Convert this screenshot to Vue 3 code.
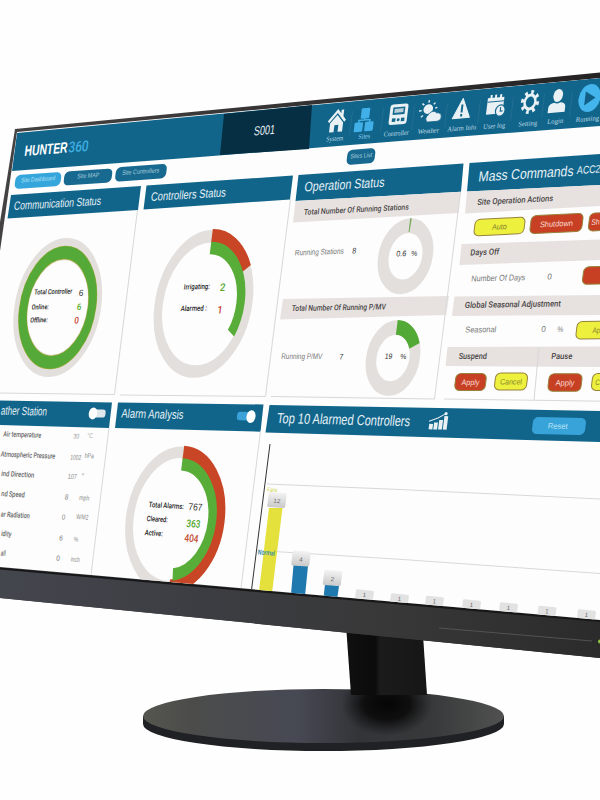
<script setup>
// perspective of the tilted screen: rows fan out from a point far to the left
const VX = -2433
const VY = 357
const SKEW = -0.125

const place = (x, y, sx = 1, sy = 1) => {
    const slope = (y - VY) / (x - VX)
    return `matrix(${sx} ${(slope * sx).toFixed(4)} ${SKEW * sy} ${sy} ${x} ${y})`
}

const BLUE = '#11658b'

const bands = [
    // header
    { p: '17,133 600,78 600,126 400,141 200,157 12,171', f: BLUE },
    { p: '224,114 312,105 309,149 220,155', f: '#062f43' },
    // panel titles
    { p: '11,195 141,186 138,210 7.5,218.6', f: BLUE },
    { p: '146.5,185.5 293,175.5 290,199.5 143.5,209.5', f: BLUE },
    { p: '298.5,175 463.5,163.5 461,191.8 295.5,201', f: BLUE },
    { p: '469.5,163 600,154 600,185 467,191.5', f: BLUE },
    { p: '0,400.5 112,402.5 109,428 0,425', f: BLUE },
    { p: '118,402.5 263.5,404.5 260.5,431.7 115,428', f: BLUE },
    { p: '269.5,405 600,411 600,442 265.5,432.5', f: BLUE },
    // sub titles
    { p: '295.5,201 461,191.8 458.5,213 293,222.5', f: '#e7e2e0' },
    { p: '283,299 449,296 446,315 280,319.5', f: '#e7e2e0' },
    { p: '467,191.5 600,185 600,206 465,213.5', f: '#e7e2e0' },
    { p: '461.5,244 600,239.5 600,260 459.5,265', f: '#e7e2e0' },
    { p: '454.5,296.5 600,295 600,315 452,316', f: '#e7e2e0' },
    { p: '447.5,347 600,346.5 600,367 445.5,366', f: '#e7e2e0' }
]

const lines = [
    'M137.5 210 L114.5 394.5 L0 393',
    'M290.5 199 L265.5 396.5 L120 395',
    'M460.5 192 L434.5 399 L271 396.5',
    'M600 401.2 L444 399',
    'M539 347 L534 400',
    'M109 428 L91 575',
    'M260.5 431 L241 588',
    'M267 484 L400 489.5 L600 499',
    'M258 550.5 L400 559.3 L600 573.5'
]

// x, y = start of the baseline, w = drawn width
const texts = [
    { t: 'HUNTER', x: 24, y: 156, w: 43, s: 15, c: '#fff', b: 1 },
    { t: '360', x: 68, y: 152.5, w: 20, s: 15, c: '#3fb0e4', k: 1 },
    { t: 'S001', x: 253.5, y: 135.5, w: 21, s: 13, c: '#e8f1f5' },
    { t: 'Site Dashboard', x: 21, y: 182.5, w: 34, s: 6.5, c: '#b6e2f6' },
    { t: 'Site MAP', x: 77, y: 178.5, w: 22, s: 6.5, c: '#a9cddd' },
    { t: 'Site Controllers', x: 122, y: 175, w: 37, s: 6.5, c: '#a9cddd' },
    { t: 'Sites List', x: 350, y: 158.5, w: 22, s: 6.5, c: '#a9cddd' },
    { t: 'Communication Status', x: 13.5, y: 210, w: 87, s: 12, c: '#e6f1f6' },
    { t: 'Controllers Status', x: 150.5, y: 201, w: 75, s: 12.2, c: '#e6f1f6' },
    { t: 'Operation Status', x: 304, y: 191.5, w: 80, s: 13.5, c: '#e6f1f6' },
    { t: 'Mass Commands', x: 478, y: 181.5, w: 95, s: 14.5, c: '#e6f1f6' },
    { t: 'ACC2', x: 576.5, y: 174, w: 23.5, s: 11, c: '#e6f1f6' },
    { t: 'ather Station', x: 0.5, y: 414.5, w: 46, s: 12, c: '#e6f1f6' },
    { t: 'Alarm Analysis', x: 121, y: 417.5, w: 62, s: 12.5, c: '#e6f1f6' },
    { t: 'Top 10 Alarmed Controllers', x: 276.5, y: 423, w: 133, s: 14.5, c: '#e6f1f6' },
    { t: 'Reset', x: 547.5, y: 428.5, w: 20, s: 8, c: '#b9e4f7' },

    { t: 'Total Controller', x: 34, y: 294.5, w: 38, s: 7, c: '#222', k: 1 },
    { t: '6', x: 78.5, y: 296, w: 4.5, s: 9, c: '#333' },
    { t: 'Online:', x: 31.5, y: 309.5, w: 17, s: 7, c: '#222', k: 1 },
    { t: '6', x: 76.5, y: 310, w: 4.5, s: 9, c: '#55b02c', k: 1 },
    { t: 'Offline:', x: 30, y: 322.5, w: 17.5, s: 7, c: '#222', k: 1 },
    { t: '0', x: 74, y: 323.5, w: 4.5, s: 9, c: '#c8412c', k: 1 },
    { t: 'Irrigating:', x: 183.5, y: 289.5, w: 26, s: 7.5, c: '#222', k: 1 },
    { t: '2', x: 219.5, y: 291, w: 5.5, s: 10.5, c: '#4fa52c', k: 1 },
    { t: 'Alarmed :', x: 180.5, y: 311, w: 26, s: 7.5, c: '#222', k: 1 },
    { t: '1', x: 217, y: 313.5, w: 5, s: 10.5, c: '#c23420', k: 1 },

    { t: 'Total Number Of Running Stations', x: 303.5, y: 215, w: 105, s: 8, c: '#4a4646', k: 1 },
    { t: 'Running Stations', x: 294.5, y: 255.5, w: 49, s: 8, c: '#777' },
    { t: '8', x: 352, y: 253.5, w: 4, s: 8, c: '#333' },
    { t: '0.6', x: 396, y: 256.5, w: 10, s: 8, c: '#333' },
    { t: '%', x: 411, y: 256, w: 6, s: 7.5, c: '#333' },
    { t: 'Total Number Of Running P/MV', x: 291.5, y: 311, w: 94, s: 8, c: '#4a4646', k: 1 },
    { t: 'Running P/MV', x: 281, y: 359, w: 41, s: 8, c: '#777' },
    { t: '7', x: 339, y: 359.5, w: 4, s: 8, c: '#333' },
    { t: '19', x: 384.5, y: 359, w: 7.5, s: 8, c: '#333' },
    { t: '%', x: 400, y: 359, w: 6, s: 7.5, c: '#333' },

    { t: 'Site Operation Actions', x: 477, y: 205, w: 76, s: 8.5, c: '#4a4646', k: 1 },
    { t: 'Days Off', x: 470, y: 255.5, w: 29, s: 8.5, c: '#4a4646', k: 1 },
    { t: 'Number Of Days', x: 471, y: 281.5, w: 54, s: 8.5, c: '#777' },
    { t: '0', x: 547, y: 279.5, w: 4.5, s: 8.5, c: '#777' },
    { t: 'Global Seasonal Adjustment', x: 464.5, y: 308, w: 96, s: 8.5, c: '#4a4646', k: 1 },
    { t: 'Seasonal', x: 465, y: 332.5, w: 31, s: 8.5, c: '#777' },
    { t: '0', x: 541, y: 332, w: 4.5, s: 8.5, c: '#777' },
    { t: '%', x: 557, y: 332, w: 6, s: 8, c: '#777' },
    { t: 'Suspend', x: 458.5, y: 359, w: 28, s: 8.5, c: '#4a4646', k: 1 },
    { t: 'Pause', x: 551, y: 359, w: 21, s: 8.5, c: '#4a4646', k: 1 },

    { t: 'Air temperature', x: 3, y: 436.5, w: 38, s: 7.5, c: '#666', k: 1 },
    { t: 'Atmospheric Pressure', x: 0.5, y: 456.5, w: 54.5, s: 7.5, c: '#666', k: 1 },
    { t: 'ind Direction', x: 1, y: 476, w: 33, s: 7.5, c: '#666', k: 1 },
    { t: 'nd Speed', x: 1, y: 496, w: 23.5, s: 7.5, c: '#666', k: 1 },
    { t: 'ar Radiation', x: 0.5, y: 516.5, w: 29, s: 7.5, c: '#666', k: 1 },
    { t: 'idity', x: 1, y: 536, w: 10, s: 7.5, c: '#666', k: 1 },
    { t: 'all', x: 0.5, y: 555.5, w: 4.8, s: 7.5, c: '#666', k: 1 },
    { t: '30', x: 73, y: 438.5, w: 6, s: 7, c: '#999' },
    { t: '°C', x: 87, y: 438, w: 5.5, s: 7, c: '#aaa' },
    { t: '1002', x: 70, y: 459.5, w: 11, s: 7, c: '#888' },
    { t: 'hPa', x: 84.5, y: 458, w: 9, s: 7, c: '#888' },
    { t: '107', x: 67.5, y: 478.5, w: 9, s: 7, c: '#888' },
    { t: '°', x: 81, y: 478, w: 3, s: 7, c: '#999' },
    { t: '8', x: 64.5, y: 499.5, w: 3.5, s: 7.5, c: '#777' },
    { t: 'mph', x: 79, y: 500, w: 10, s: 7, c: '#888' },
    { t: '0', x: 61.5, y: 519.5, w: 3.5, s: 7.5, c: '#888' },
    { t: 'W/M2', x: 76, y: 519, w: 12, s: 7, c: '#888' },
    { t: '6', x: 59, y: 540.5, w: 3.5, s: 7.5, c: '#777' },
    { t: '%', x: 73.5, y: 541.5, w: 4.5, s: 7, c: '#888' },
    { t: '0', x: 56, y: 560.5, w: 3.5, s: 7.5, c: '#777' },
    { t: 'inch', x: 70.5, y: 561.5, w: 9, s: 7, c: '#888' },

    { t: 'Total Alarms:', x: 148.5, y: 507, w: 35, s: 7.5, c: '#222', k: 1 },
    { t: '767', x: 188, y: 510, w: 14, s: 10, c: '#333' },
    { t: 'Cleared:', x: 146.5, y: 521, w: 21, s: 7.5, c: '#222', k: 1 },
    { t: '363', x: 186, y: 527, w: 14, s: 10.5, c: '#4fa52c', k: 1 },
    { t: 'Active:', x: 144.5, y: 535, w: 18, s: 7.5, c: '#222', k: 1 },
    { t: '404', x: 184, y: 541.5, w: 14, s: 10.5, c: '#c24a30', k: 1 },
    { t: 'Fans', x: 267, y: 491.5, w: 10, s: 6, c: '#c9d12f' }
]

const menu = [
    { t: 'System', x: 326, y: 141.5, w: 17 },
    { t: 'Sites', x: 358, y: 139, w: 12, c: '#8fd2f2' },
    { t: 'Controller', x: 383.5, y: 136.5, w: 25 },
    { t: 'Weather', x: 417.5, y: 134, w: 21 },
    { t: 'Alarm Info', x: 447, y: 131.5, w: 29 },
    { t: 'User log', x: 483, y: 129, w: 22 },
    { t: 'Setting', x: 518, y: 126.5, w: 19 },
    { t: 'Login', x: 547, y: 124, w: 16 },
    { t: 'Running', x: 575.5, y: 122, w: 23.5 }
]

const dividers = [[351, 121], [382, 118], [413, 116], [446, 113], [479, 110], [512, 107], [543, 104], [571, 102]]

const buttons = [
    { x: 38, y: 180.5, w: 46, h: 14, f: '#35a6dc' },
    { x: 88, y: 177, w: 48, h: 14, f: '#17698f' },
    { x: 141, y: 172.7, w: 51, h: 14.5, f: '#17698f' },
    { x: 361, y: 156.5, w: 28, h: 15, f: '#17698f' },
    { x: 559, y: 426, w: 53, h: 17, f: '#38a3d8' },
    { x: 499.5, y: 226.5, w: 50, h: 16.5, f: '#eef03e', t: 'Auto', tw: 15 },
    { x: 556.5, y: 223.5, w: 52, h: 18, f: '#c84024', t: 'Shutdown', tw: 33 },
    { x: 614, y: 221, w: 50, h: 18, f: '#c84024', t: 'Sh', tw: 8.5, tx: -18.5 },
    { x: 608, y: 275, w: 50, h: 17.5, f: '#c84024' },
    { x: 602, y: 330, w: 51, h: 17.5, f: '#eef03e', t: 'Ap', tw: 8, tx: -5.5 },
    { x: 470.5, y: 382, w: 30.5, h: 17, f: '#c84024', t: 'Apply', tw: 18 },
    { x: 511, y: 381.5, w: 32, h: 17, f: '#eef03e', t: 'Cancel', tw: 22 },
    { x: 565, y: 382.5, w: 33, h: 17.5, f: '#c84024', t: 'Apply', tw: 19 },
    { x: 608.5, y: 382, w: 33, h: 17, f: '#eef03e', t: 'C', tw: 4.5, tx: -11 }
]

// arcs: [share of the circle, inner radius, outer radius, colour]
const rings = [
    { x: 57.7, y: 307.5, rx: 43.5, ry: 69.5, inner: 68, arcs: [[100, 69, 89, '#a5ad3a'], [100, 70, 88, '#55a938']] },
    { x: 203.5, y: 303.8, rx: 49, ry: 74, inner: 83, arcs: [[16.5, 82, 101, '#c84626'], [34, 67, 84, '#58ad38']] },
    { x: 405.5, y: 256.3, rx: 27.5, ry: 38, inner: 61, arcs: [[0.9, 64, 100, '#74a95a']] },
    { x: 393, y: 358, rx: 27, ry: 38, inner: 61, arcs: [[18.5, 61, 100, '#53a936']] },
    { x: 175, y: 519.5, rx: 49, ry: 73, inner: 84, arcs: [[49, 82, 101, '#c84626'], [48, 67, 84, '#58ad38']] }
]

const bars = [
    { p: '269,508 282.5,508 272,593 259,591', f: '#e4e13d' },
    { p: '293.5,565 308,566 305,596 291,594', f: '#2079ae' },
    { p: '325,584 339,586 337,600 323.5,598', f: '#2079ae' }
]

const tags = [
    { x: 277, y: 500, t: '12' },
    { x: 301, y: 558.5, t: '4' },
    { x: 332.5, y: 578, t: '2' }
]

// values that sit right above the lower edge of the screen
const lowTags = [
    { x: 364.5, y: 594.5 },
    { x: 399.5, y: 598.5 },
    { x: 434.5, y: 601 },
    { x: 471.5, y: 604.5 },
    { x: 508.5, y: 607.5 },
    { x: 547, y: 611 },
    { x: 586.5, y: 614.5 }
]
</script>

<template>
    <main class="stage">
        <svg class="monitor" viewBox="0 0 600 800" width="600" height="800" xmlns="http://www.w3.org/2000/svg">
            <defs>
                <clipPath id="screen">
                    <path d="M17 132 L600 78 V620 L0 567 V251 Z" />
                </clipPath>
                <linearGradient id="chin" x1="0" x2="1">
                    <stop offset="0" stop-color="#44464e" />
                    <stop offset="0.35" stop-color="#3c3d42" />
                    <stop offset="0.65" stop-color="#383838" />
                    <stop offset="1" stop-color="#2b2b2b" />
                </linearGradient>
                <linearGradient id="rim" x1="0" x2="1">
                    <stop offset="0" stop-color="#454243" />
                    <stop offset="1" stop-color="#242223" />
                </linearGradient>
                <linearGradient id="foot" x1="0" x2="1">
                    <stop offset="0" stop-color="#55564f" />
                    <stop offset="0.14" stop-color="#4b4c4a" />
                    <stop offset="0.42" stop-color="#474954" />
                    <stop offset="0.6" stop-color="#333438" />
                    <stop offset="0.8" stop-color="#38393a" />
                    <stop offset="1" stop-color="#505150" />
                </linearGradient>
                <linearGradient id="neck" x1="0" x2="1">
                    <stop offset="0" stop-color="#101010" />
                    <stop offset="0.36" stop-color="#0b0b0b" />
                    <stop offset="0.42" stop-color="#1b1b1b" />
                    <stop offset="1" stop-color="#161616" />
                </linearGradient>
                <linearGradient id="tag" x1="0" x2="0" y1="0" y2="1">
                    <stop offset="0" stop-color="#f3f3f3" />
                    <stop offset="1" stop-color="#c9c9c9" />
                </linearGradient>
                <radialGradient id="shade">
                    <stop offset="0" stop-color="#050505" />
                    <stop offset="0.5" stop-color="#080808" stop-opacity="0.85" />
                    <stop offset="1" stop-color="#111" stop-opacity="0" />
                </radialGradient>
                <clipPath id="plate">
                    <ellipse cx="323.5" cy="716" rx="180.5" ry="27" />
                </clipPath>
            </defs>

            <!-- stand -->
            <path d="M143 716 V724 A180.5 27 0 0 0 504 724 V716 Z" fill="#202124" />
            <ellipse cx="323.5" cy="716" rx="180.5" ry="27" fill="url(#foot)" />
            <ellipse cx="387" cy="704" rx="46" ry="32" fill="url(#shade)" clip-path="url(#plate)" />
            <path d="M346 625 L423 635 L427 695 H351 Z" fill="url(#neck)" />

            <!-- case -->
            <path d="M15 129 L600 72.5 V658 L0 598 V222 Z" fill="url(#rim)" />
            <path d="M0 567 L600 620 V658 L0 598 Z" fill="url(#chin)" />
            <path d="M0 568.5 L600 621" stroke="#171717" stroke-width="2" />
            <path d="M439 628 L592 641" stroke="#5c5c5c" stroke-width="0.8" />
            <circle cx="600" cy="641.5" r="2" fill="#8ec63f" />

            <g clip-path="url(#screen)">
                <rect width="600" height="640" fill="#fdfdfd" />
                <polygon v-for="(b, i) in bands" :key="'b' + i" :points="b.p" :fill="b.f" />
                <path v-for="(d, i) in lines" :key="'l' + i" :d="d" class="rule" />

                <g v-for="(r, i) in rings" :key="'r' + i" :transform="place(r.x, r.y, r.rx / 100, r.ry / 100)">
                    <circle :r="(100 + r.inner) / 2" :stroke-width="100 - r.inner" fill="none" stroke="#e3dfdc" />
                    <circle v-for="(a, j) in r.arcs" :key="j" :r="(a[1] + a[2]) / 2" :stroke-width="a[2] - a[1]"
                        :stroke="a[3]" fill="none" pathLength="100" :stroke-dasharray="a[0] + ' ' + (100.01 - a[0])"
                        transform="rotate(-90)" />
                </g>

                <g v-for="(b, i) in buttons" :key="'btn' + i" :transform="place(b.x, b.y)">
                    <rect :x="-b.w / 2" :y="-b.h / 2" :width="b.w" :height="b.h" rx="5" :fill="b.f"
                        :class="{ outlined: i > 4 }" />
                    <text v-if="b.t" :x="b.tx || 0" y="3" text-anchor="middle" class="btn-text" :textLength="b.tw"
                        lengthAdjust="spacingAndGlyphs" :fill="b.f === '#c84024' ? '#f8dcd4' : '#85852f'">{{ b.t
                        }}</text>
                </g>

                <!-- bar chart -->
                <path d="M270 444 L251.5 590" stroke="#333" stroke-width="1" />
                <polygon v-for="(b, i) in bars" :key="'bar' + i" :points="b.p" :fill="b.f" />
                <g v-for="(t, i) in tags" :key="'t' + i" :transform="place(t.x, t.y)">
                    <rect x="-9" y="-7.5" width="18" height="15" rx="1.5" fill="url(#tag)" />
                    <text y="3" text-anchor="middle" class="tag-text">{{ t.t }}</text>
                </g>
                <g v-for="(t, i) in lowTags" :key="'low' + i" :transform="place(t.x, t.y)">
                    <rect x="-9" y="-4.5" width="18" height="9" rx="1.5" fill="#e3e2e2" />
                    <text y="2.5" text-anchor="middle" class="tag-text">1</text>
                </g>
                <text :transform="place(257.5, 554.5)" font-size="7" fill="#2a86a8" textLength="17"
                    lengthAdjust="spacingAndGlyphs" class="strong">Normal</text>

                <text v-for="(t, i) in texts" :key="'x' + i" :transform="place(t.x, t.y)" :font-size="t.s" :fill="t.c"
                    :textLength="t.w" lengthAdjust="spacingAndGlyphs" :class="{ bold: t.b, strong: t.k }">{{ t.t
                    }}</text>
                <text v-for="m in menu" :key="m.t" :transform="place(m.x, m.y)" :fill="m.c || '#bfd9e4'"
                    :textLength="m.w" lengthAdjust="spacingAndGlyphs" class="menu-text">{{ m.t }}</text>
                <path v-for="d in dividers" :key="d[0]" :d="`M${d[0] + 1.5} ${d[1] - 10} l-3 24`" stroke="#2f7595"
                    stroke-width="0.6" />

                <!-- house -->
                <g :transform="place(337, 120)" fill="#e9f1f4">
                    <path d="M-9 0.5 L0 -11 L3.5 -6.5 V-10 H6 V-3.5 L9 0.5 L7.5 2.5 L0 -7 L-7.5 2.5 Z" />
                    <path d="M-6.5 3 L0 -5 L6.5 3 V12 H2 V5 H-2 V12 H-6.5 Z" />
                </g>
                <!-- site tree -->
                <g :transform="place(364.5, 119.5)" fill="#41b0e8">
                    <rect x="-4" y="-11.5" width="8.5" height="10.5" rx="1" />
                    <rect x="-9.5" y="2.5" width="8.5" height="9.5" rx="1" />
                    <rect x="1" y="2.5" width="8.5" height="9.5" rx="1" />
                    <path d="M0 -3 V1 M-5.5 4 V0.5 H5.5 V4" stroke="#41b0e8" stroke-width="1.5" fill="none" />
                </g>
                <!-- controller -->
                <g :transform="place(398.5, 114.5)">
                    <rect x="-9" y="-10.5" width="18" height="20.5" rx="2.5" fill="#e9f1f4" />
                    <rect x="-6" y="-7.5" width="12" height="7.5" fill="#17688d" />
                    <rect x="-4.5" y="-6" width="9" height="4" fill="#b9d0db" />
                    <rect x="-6" y="3.5" width="3.5" height="3.5" fill="#17688d" />
                    <circle cx="0.3" cy="5.2" r="1.5" fill="#17688d" />
                    <rect x="3" y="3.5" width="3.5" height="3.5" fill="#17688d" />
                </g>
                <!-- sun and cloud -->
                <g :transform="place(430, 111)" fill="#e9f1f4">
                    <circle cx="-2" cy="-2" r="4.8" />
                    <path d="M-2 -11 V-8.5 M-8.5 -8 L-6.5 -6.5 M-11 -1 H-8.5 M-8.5 5.5 L-6.5 4 M4.5 -8 L3 -6.5 M7 -3 L5 -2.5"
                        stroke="#e9f1f4" stroke-width="1.5" />
                    <path d="M-1 11 A4 4 0 0 1 -1.5 4 A5 5 0 0 1 7 2.5 A4.3 4.3 0 0 1 8.5 11 Z" stroke="#17688d"
                        stroke-width="0.8" />
                </g>
                <!-- warning -->
                <g :transform="place(462, 108.5)">
                    <path d="M0 -10 L8.5 9.5 H-8.5 Z" fill="#e9f1f4" stroke="#e9f1f4" stroke-linejoin="round" />
                    <path d="M0 -4 V4 M0 5.5 V8" stroke="#17688d" stroke-width="2" />
                </g>
                <!-- calendar with clock -->
                <g :transform="place(496, 105)">
                    <path d="M-9 -7.5 H7.5 V9 H-9 Z" fill="#e9f1f4" />
                    <path d="M-9 -3.5 H7.5" stroke="#17688d" stroke-width="1" />
                    <path d="M-5.5 -10.5 V-6 M-1 -10.5 V-6 M4 -10.5 V-6" stroke="#e9f1f4" stroke-width="2" />
                    <ellipse cx="5" cy="6" rx="4.8" ry="5.6" fill="#e9f1f4" stroke="#17688d" stroke-width="1.2" />
                    <path d="M5 2.5 V6.5 H7.5" stroke="#17688d" stroke-width="1.1" fill="none" />
                </g>
                <!-- gear -->
                <g :transform="place(530, 102, 0.87, 1.13)">
                    <circle r="8.6" fill="none" stroke="#e9f1f4" stroke-width="4" pathLength="16"
                        stroke-dasharray="0.9 1.1" />
                    <circle r="6.2" fill="none" stroke="#e9f1f4" stroke-width="2.8" />
                </g>
                <!-- user -->
                <g :transform="place(557.5, 101)" fill="#e9f1f4">
                    <ellipse cx="0" cy="-5.5" rx="4.8" ry="6.5" />
                    <path d="M-8.5 11.5 V6 Q-8 2 -3 1.5 Q0 3.5 3 1.5 Q8 2 8.5 6 V11.5 Z" />
                </g>
                <!-- play -->
                <g :transform="place(589.5, 98)">
                    <ellipse rx="11" ry="14" fill="#43b4ec" />
                    <path d="M-4.5 -7 L6 0 L-4.5 7 Z" fill="#125f86" />
                </g>

                <!-- toggles -->
                <g :transform="place(97, 413.5)">
                    <rect x="-4" y="-4" width="12.5" height="8" rx="3" fill="#e1e8ec" />
                    <ellipse cx="-4" rx="4.2" ry="6" fill="#fff" />
                </g>
                <g :transform="place(246, 416.5)">
                    <rect x="-9" y="-4.5" width="14" height="8.5" rx="3" fill="#3aa2d8" />
                    <ellipse cx="5" rx="4.5" ry="6.3" fill="#fff" />
                </g>

                <!-- growth chart -->
                <g :transform="place(438.5, 422)" fill="#e9f1f4">
                    <path d="M-9 7.5 V2 H-5.2 V7.5 Z M-4.3 7.5 V0.5 H-0.5 V7.5 Z M0.5 7.5 V-2 H4.3 V7.5 Z M5.2 7.5 V-6 H9 V7.5 Z" />
                    <path d="M-9.5 -0.5 L-1 -4 L6.5 -8.5" stroke="#e9f1f4" stroke-width="1" fill="none" />
                    <circle cx="6.5" cy="-8.5" r="1.6" />
                </g>
            </g>
        </svg>
    </main>
</template>

<style>
body {
    background: #fff;
}
</style>

<style scoped>
.stage {
    width: 600px;
    height: 800px;
    overflow: hidden;
    background: #fefefe;
}

.monitor {
    display: block;
    font-family: 'Liberation Sans', Roboto, sans-serif;
}

.rule {
    fill: none;
    stroke: #d9d8d8;
    stroke-width: 1;
}

.bold {
    font-weight: 700;
}

.strong {
    font-family: Roboto, 'Liberation Sans', sans-serif;
    font-weight: 500;
}

.outlined {
    stroke: #96823a;
    stroke-width: 1;
}

.btn-text {
    font-size: 8px;
}

.menu-text {
    font-family: 'Liberation Serif', serif;
    font-size: 7px;
}

.tag-text {
    font-size: 6px;
    fill: #666;
}
</style>
